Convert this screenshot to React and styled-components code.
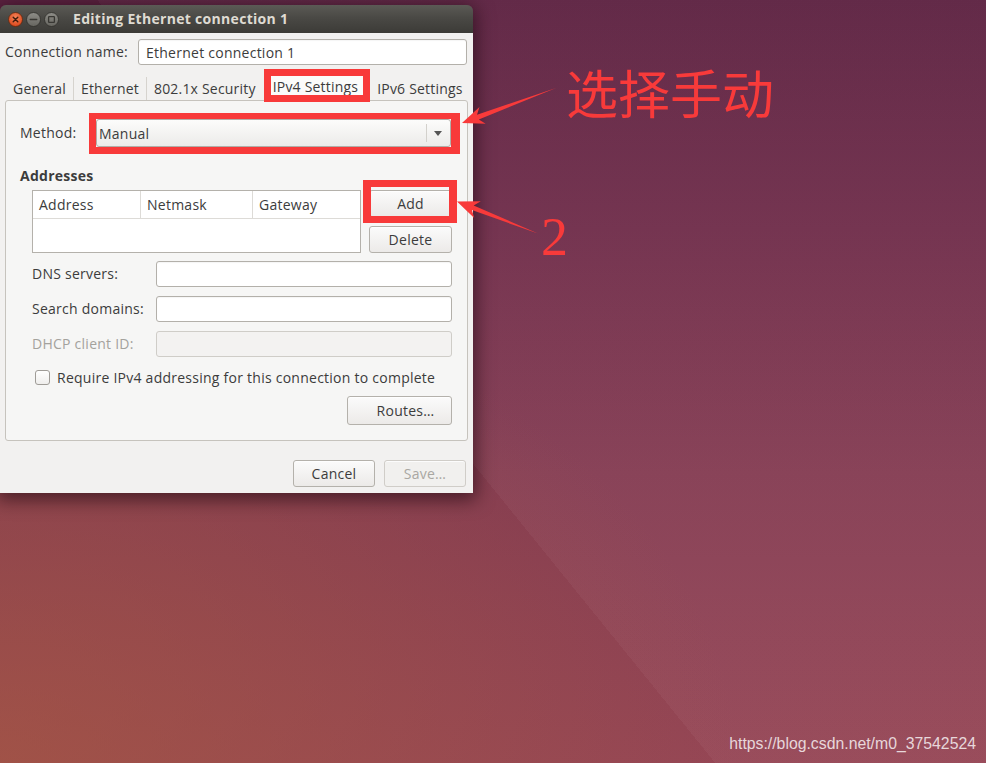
import React from "react";
import styled, { createGlobalStyle } from "styled-components";

const RED = "#f83a3a";
const UI_FONT = `"Open Sans", "Noto Sans", sans-serif`;
const TEXT = "#3c3c3c";

const GlobalStyle = createGlobalStyle`
  html, body { margin: 0; padding: 0; }
  body { font-family: ${UI_FONT}; overflow: hidden; }
  * { box-sizing: border-box; }
`;

const Desktop = styled.div`
  position: relative;
  width: 986px;
  height: 763px;
  overflow: hidden;
  padding-top: 5px;
  background:
    linear-gradient(51deg, rgba(0,0,0,0) 44.6%, rgba(255, 225, 235, 0.045) 44.6%),
    radial-gradient(ellipse 75% 65% at 0% 100%, rgba(168, 90, 62, 0.6), rgba(165, 88, 62, 0) 100%),
    linear-gradient(180deg, #5c2241 0%, #6f2d4a 30%, #843c52 62%, #954655 100%);
`;

const Window = styled.div`
  width: 473px;
  display: flex;
  flex-direction: column;
  border-radius: 6px 6px 0 0;
  box-shadow: 0 4px 18px 3px rgba(20, 0, 10, 0.55);
`;

const TitleBar = styled.div`
  height: 28px;
  display: flex;
  align-items: center;
  gap: 3px;
  padding-left: 8px;
  border-radius: 6px 6px 0 0;
  background: linear-gradient(to bottom, #5b5a55 0%, #4a4945 45%, #3c3b37 100%);
`;

const WinButton = styled.svg`
  width: 15px;
  height: 15px;
  flex: none;
  display: block;
`;

const Title = styled.span`
  margin-left: 11px;
  color: #dfdbd2;
  font-weight: 700;
  font-size: 14px;
  letter-spacing: 0.3px;
  line-height: 18px;
  white-space: nowrap;
`;

const Body = styled.div`
  background: #f2f1f0;
  padding: 6px 5px 6px 5px;
  display: flex;
  flex-direction: column;
  color: ${TEXT};
  font-size: 14px;
  letter-spacing: 0.25px;
`;

const NameRow = styled.div`
  display: flex;
  align-items: center;
  height: 26px;
  padding-right: 1px;
`;

const RowLabel = styled.span`
  flex: none;
  width: ${(p) => p.$width}px;
  color: ${(p) => (p.$disabled ? "#a4a29d" : TEXT)};
  font-size: 14px;
  line-height: 18px;
  white-space: nowrap;
`;

const Entry = styled.input`
  flex: 1;
  min-width: 0;
  width: 100%;
  height: 26px;
  border: 1px solid ${(p) => (p.disabled ? "#cfcdc8" : "#b3b0aa")};
  border-radius: 3px;
  background: ${(p) => (p.disabled ? "#f3f2f1" : "#ffffff")};
  padding: 0 7px;
  font-family: ${UI_FONT};
  font-size: 14px;
  letter-spacing: 0.25px;
  color: ${TEXT};
  outline: none;
  box-shadow: ${(p) => (p.disabled ? "none" : "inset 0 1px 1px rgba(0,0,0,0.04)")};
`;

const TabRow = styled.div`
  display: flex;
  align-items: flex-end;
  height: 31px;
  margin-top: 4px;
  position: relative;
  z-index: 1;
  letter-spacing: 0.2px;
`;

const Tab = styled.div`
  height: 23px;
  display: flex;
  align-items: center;
  padding: 0 7px 0 ${(p) => (p.$first ? "8px" : "7px")};
  border-left: ${(p) => (p.$sep ? "1px solid #d6d3ce" : "none")};
  color: ${TEXT};
  font-size: 14px;
  white-space: nowrap;
`;

const ActiveTab = styled.div`
  position: relative;
  height: 19px;
  margin: 0 7px 5px 8px;
  padding: 3px 5px 0 2px;
  line-height: 16px;
  background: #fbfbfa;
  color: ${TEXT};
  font-size: 14px;
  white-space: nowrap;
  &::after {
    content: "";
    position: absolute;
    inset: -7px;
    border: 7px solid ${RED};
    pointer-events: none;
  }
`;

const Notebook = styled.div`
  border: 1px solid #c6c3bd;
  border-radius: 3px;
  background: #f6f6f5;
  padding: 18px 15px 15px 14px;
  display: flex;
  flex-direction: column;
`;

const MethodRow = styled.div`
  display: flex;
  align-items: center;
  height: 28px;
`;

const Combo = styled.div`
  position: relative;
  flex: 1;
  height: 28px;
  margin-right: 1px;
  display: flex;
  align-items: center;
  padding-left: 2px;
  border: 1px solid #b1aea8;
  border-radius: 3px;
  background: linear-gradient(to bottom, #fcfcfb, #ecebe9);
  font-size: 14px;
  color: ${TEXT};
  &::after {
    content: "";
    position: absolute;
    top: -7px;
    left: -8px;
    right: -10px;
    bottom: -8px;
    border-style: solid;
    border-color: ${RED};
    border-width: 6px 9px 7px 7px;
    pointer-events: none;
  }
`;

const ComboToggle = styled.span`
  margin-left: auto;
  width: 24px;
  height: 18px;
  border-left: 1px solid #d3d1cc;
  display: flex;
  align-items: center;
  justify-content: center;
  padding-right: 2px;
`;

const Heading = styled.div`
  margin-top: 20px;
  font-weight: 700;
  font-size: 14px;
  line-height: 18px;
  color: ${TEXT};
`;

const Indented = styled.div`
  padding-left: 12px;
  display: flex;
  flex-direction: column;
`;

const AddrGrid = styled.div`
  margin-top: 5px;
  display: flex;
  gap: 8px;
`;

const AddrTable = styled.div`
  width: 329px;
  height: 63px;
  border: 1px solid #b4b1ab;
  background: #ffffff;
  display: flex;
  flex-direction: column;
`;

const HeaderRow = styled.div`
  display: grid;
  grid-template-columns: 108px 112px 1fr;
  height: 28px;
  border-bottom: 1px solid #dddbd7;
`;

const HeaderCell = styled.div`
  display: flex;
  align-items: center;
  padding-left: 6px;
  border-right: ${(p) => (p.$last ? "none" : "1px solid #dddbd7")};
  font-size: 14px;
  color: ${TEXT};
`;

const ButtonColumn = styled.div`
  width: 83px;
  display: flex;
  flex-direction: column;
  gap: 9px;
`;

const Button = styled.button`
  position: relative;
  width: ${(p) => (p.$w ? `${p.$w}px` : "100%")};
  height: ${(p) => p.$h || 27}px;
  border: 1px solid ${(p) => (p.disabled ? "#d0cdc8" : "#b4b1ab")};
  border-radius: 3px;
  background: ${(p) =>
    p.disabled ? "#f1f0ee" : "linear-gradient(to bottom, #fbfbfb, #eceae8)"};
  box-shadow: inset 0 1px 0 rgba(255, 255, 255, 0.8);
  font-family: ${UI_FONT};
  font-size: 14px;
  letter-spacing: 0.25px;
  color: ${(p) => (p.disabled ? "#a9a7a2" : TEXT)};
  padding: ${(p) => (p.$padLeft ? `0 0 0 ${p.$padLeft}px` : "0")};
  display: flex;
  align-items: center;
  justify-content: center;
  ${(p) =>
    p.$marked &&
    `
    &::after {
      content: "";
      position: absolute;
      top: -11px;
      left: -7px;
      right: -6px;
      bottom: -7px;
      border-style: solid;
      border-color: ${RED};
      border-width: 7px 8px 7px 8px;
      pointer-events: none;
    }
  `}
`;

const FormGrid = styled.div`
  margin-top: 8px;
  display: grid;
  grid-template-columns: 124px 1fr;
  row-gap: 9px;
  align-items: center;
`;

const CheckRow = styled.div`
  margin-top: 11px;
  height: 18px;
  display: flex;
  align-items: center;
  gap: 7px;
  padding-left: 3px;
  font-size: 14px;
  color: ${TEXT};
  white-space: nowrap;
`;

const CheckBox = styled.span`
  width: 15px;
  height: 15px;
  flex: none;
  border: 1px solid #9f9c97;
  border-radius: 3px;
  background: linear-gradient(to bottom, #ffffff, #efeeec);
`;

const RightRow = styled.div`
  margin-top: ${(p) => p.$mt}px;
  display: flex;
  justify-content: flex-end;
  gap: 9px;
  padding-right: ${(p) => p.$pr || 0}px;
`;

const Overlay = styled.svg`
  position: absolute;
  inset: 0;
  width: 986px;
  height: 763px;
  pointer-events: none;
`;

const Callout = styled.div`
  position: absolute;
  left: ${(p) => p.$x}px;
  top: ${(p) => p.$y}px;
  color: ${RED};
  font-family: ${(p) => p.$font};
  font-size: ${(p) => p.$size}px;
  line-height: ${(p) => p.$size}px;
  white-space: nowrap;
`;

const Watermark = styled.div`
  position: absolute;
  right: 10px;
  bottom: 10px;
  font-family: "Liberation Sans", Arial, sans-serif;
  font-size: 15.8px;
  line-height: 18px;
  color: rgba(255, 255, 255, 0.78);
`;

function CloseIcon() {
  return (
    <WinButton viewBox="0 0 15 15">
      <defs>
        <radialGradient id="cg" cx="50%" cy="35%" r="65%">
          <stop offset="0%" stopColor="#f7855a" />
          <stop offset="100%" stopColor="#d9461b" />
        </radialGradient>
      </defs>
      <circle cx="7.5" cy="7.5" r="7" fill="url(#cg)" stroke="#5c2810" strokeWidth="0.8" />
      <path d="M5.2 5.2 L9.8 9.8 M9.8 5.2 L5.2 9.8" stroke="#3d1b0c" strokeWidth="1.4" strokeLinecap="round" />
    </WinButton>
  );
}

function GreyIcon({ kind }) {
  return (
    <WinButton viewBox="0 0 15 15">
      <defs>
        <linearGradient id="gg" x1="0" y1="0" x2="0" y2="1">
          <stop offset="0%" stopColor="#8e8d88" />
          <stop offset="100%" stopColor="#66655f" />
        </linearGradient>
      </defs>
      <circle cx="7.5" cy="7.5" r="7" fill="url(#gg)" stroke="#2e2d2a" strokeWidth="0.8" />
      {kind === "min" ? (
        <path d="M4.3 7.5 H10.7" stroke="#383733" strokeWidth="1.5" strokeLinecap="round" />
      ) : (
        <rect x="4.6" y="4.6" width="5.8" height="5.8" rx="0.6" fill="none" stroke="#383733" strokeWidth="1.3" />
      )}
    </WinButton>
  );
}

export default function App() {
  return (
    <>
      <GlobalStyle />
      <Desktop>
        <Window>
          <TitleBar>
            <CloseIcon />
            <GreyIcon kind="min" />
            <GreyIcon kind="max" />
            <Title>Editing Ethernet connection 1</Title>
          </TitleBar>
          <Body>
            <NameRow>
              <RowLabel $width={133}>Connection name:</RowLabel>
              <Entry readOnly defaultValue="Ethernet connection 1" />
            </NameRow>
            <TabRow>
              <Tab $first>General</Tab>
              <Tab $sep>Ethernet</Tab>
              <Tab $sep>802.1x Security</Tab>
              <ActiveTab>IPv4 Settings</ActiveTab>
              <Tab>IPv6 Settings</Tab>
            </TabRow>
            <Notebook>
              <MethodRow>
                <RowLabel $width={76}>Method:</RowLabel>
                <Combo>
                  Manual
                  <ComboToggle>
                    <svg width="8" height="5" viewBox="0 0 8 5">
                      <path d="M0 0 H8 L4 5 Z" fill="#555" />
                    </svg>
                  </ComboToggle>
                </Combo>
              </MethodRow>
              <Heading>Addresses</Heading>
              <Indented>
                <AddrGrid>
                  <AddrTable>
                    <HeaderRow>
                      <HeaderCell>Address</HeaderCell>
                      <HeaderCell>Netmask</HeaderCell>
                      <HeaderCell $last>Gateway</HeaderCell>
                    </HeaderRow>
                  </AddrTable>
                  <ButtonColumn>
                    <Button $marked>Add</Button>
                    <Button>Delete</Button>
                  </ButtonColumn>
                </AddrGrid>
                <FormGrid>
                  <RowLabel>DNS servers:</RowLabel>
                  <Entry readOnly defaultValue="" />
                  <RowLabel>Search domains:</RowLabel>
                  <Entry readOnly defaultValue="" />
                  <RowLabel $disabled>DHCP client ID:</RowLabel>
                  <Entry disabled defaultValue="" />
                </FormGrid>
                <CheckRow>
                  <CheckBox />
                  Require IPv4 addressing for this connection to complete
                </CheckRow>
                <RightRow $mt={10}>
                  <Button $w={105} $h={29} $padLeft={12}>
                    Routes…
                  </Button>
                </RightRow>
              </Indented>
            </Notebook>
            <RightRow $mt={19} $pr={2}>
              <Button $w={82}>Cancel</Button>
              <Button $w={82} disabled>
                Save…
              </Button>
            </RightRow>
          </Body>
        </Window>

        <Overlay viewBox="0 0 986 763">
          <polygon
            points="462,123 479.5,106.9 477,114.8 556,88 478.8,119.4 485.7,123.7"
            fill={RED}
          />
          <polygon
            points="457,201.5 480.8,201.2 473.7,205.4 538,233.5 471.9,210.1 474.2,217.9"
            fill={RED}
          />
        </Overlay>
        <Callout $x={566} $y={66} $size={52} $font={`"Noto Sans CJK SC", sans-serif`}>
          选择手动
        </Callout>
        <Callout $x={541} $y={210} $size={54} $font={`"Liberation Serif", serif`}>
          2
        </Callout>
        <Watermark>https://blog.csdn.net/m0_37542524</Watermark>
      </Desktop>
    </>
  );
}
